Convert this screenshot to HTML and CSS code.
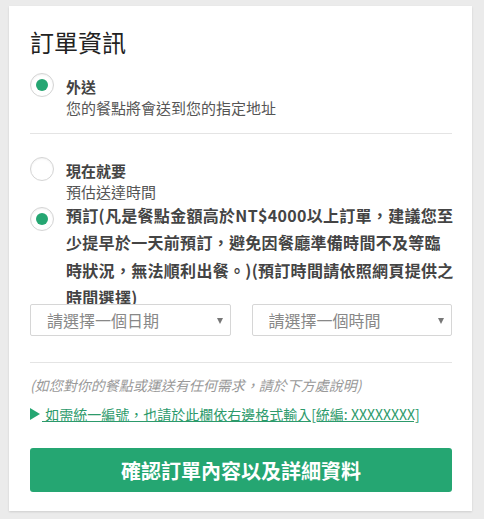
FILE: index.html
```html
<!DOCTYPE html>
<html lang="zh-Hant">
<head>
  <meta charset="UTF-8" />
  <meta name="viewport" content="width=device-width, initial-scale=1.0" />
  <title>訂單資訊</title>
  <link rel="stylesheet" href="styles.css">
</head>
<body>
  <div class="card">
    <h2 class="title">訂單資訊</h2>

    <label class="option option-first">
      <span class="radio checked"></span>
      <span class="option-text">
        <span class="option-name">外送</span>
        <span class="option-desc">您的餐點將會送到您的指定地址</span>
      </span>
    </label>

    <div class="divider"></div>

    <label class="option option-now">
      <span class="radio"></span>
      <span class="option-text">
        <span class="option-name">現在就要</span>
        <span class="option-desc">預估送達時間</span>
      </span>
    </label>

    <label class="option option-long">
      <span class="radio checked"></span>
      <span class="option-text long-text">預訂(凡是餐點金額高於NT$4000以上訂單，建議您至<br>少提早於一天前預訂，避免因餐廳準備時間不及等臨<br>時狀況，無法順利出餐。)(預訂時間請依照網頁提供之<br>時間選擇)</span>
    </label>

    <div class="selects">
      <div class="select-wrap">
        <select class="select">
          <option>請選擇一個日期</option>
        </select>
      </div>
      <div class="select-wrap">
        <select class="select">
          <option>請選擇一個時間</option>
        </select>
      </div>
    </div>

    <div class="divider divider-low"></div>

    <p class="note">(如您對你的餐點或運送有任何需求，請於下方處說明)</p>

    <a class="tax-link" href="#">
      <span class="triangle"></span>
      <span class="tax-text">&nbsp;如需統一編號，也請於此欄依右邊格式輸入[統編: XXXXXXXX]</span>
    </a>

    <button class="confirm">確認訂單內容以及詳細資料</button>
  </div>
</body>
</html>
```

FILE: styles.css
```css
body {
  margin: 0;
  padding: 6px 12px 9px 9px;
  background: #ebebeb;
  font-family: "Noto Sans CJK TC", sans-serif;
  color: #333;
}

.card {
  background: #fff;
  padding: 21px 20px 19px 21px;
  box-shadow: 0 1px 2px rgba(0, 0, 0, 0.12);
}

.title {
  margin: 0;
  font-size: 24px;
  line-height: 30px;
  font-weight: normal;
  color: #222;
}

.option {
  display: flex;
  align-items: flex-start;
  gap: 12px;
  cursor: pointer;
}

.option-first {
  margin-top: 19px;
}

.option-now {
  margin-top: 26px;
}

.radio {
  flex: none;
  width: 22px;
  height: 22px;
  margin-top: -3px;
  border: 1px solid #d4d4d4;
  border-radius: 50%;
  background: #fff;
  box-shadow: inset 0 1px 2px rgba(0, 0, 0, 0.06);
  display: flex;
  justify-content: center;
  align-items: center;
}

.radio.checked::after {
  content: "";
  width: 12px;
  height: 12px;
  border-radius: 50%;
  background: #25a672;
}

.option-text {
  display: flex;
  flex-direction: column;
  font-size: 15px;
  line-height: 21px;
}

.option-name {
  font-weight: bold;
  color: #444;
}

.option-desc {
  color: #555;
}

.option-long .radio {
  margin-top: 5px;
}

.long-text {
  display: block;
  font-size: 16px;
  line-height: 27.3px;
  font-weight: bold;
  color: #444;
  letter-spacing: 0.3px;
  white-space: nowrap;
}

.divider {
  height: 1px;
  background: #e4e4e4;
  margin-top: 15px;
}

.divider-low {
  margin-top: 26px;
}

.selects {
  display: grid;
  grid-template-columns: 1fr 1fr;
  gap: 21px;
  margin-top: -7px;
}

.select-wrap {
  position: relative;
}

.select-wrap::after {
  content: "";
  position: absolute;
  right: 8px;
  top: 14px;
  border-left: 3.5px solid transparent;
  border-right: 3.5px solid transparent;
  border-top: 6px solid #777;
  pointer-events: none;
}

.select {
  appearance: none;
  -webkit-appearance: none;
  width: 100%;
  height: 32px;
  padding: 0 20px 0 16px;
  border: 1px solid #d6d6d6;
  border-radius: 2px;
  background: #fff;
  font-family: "Noto Sans CJK TC", sans-serif;
  font-size: 16px;
  color: #888;
}

.note {
  margin: 12px 0 0;
  font-size: 14px;
  line-height: 20px;
  font-style: italic;
  color: #999;
}

.tax-link {
  display: flex;
  align-items: center;
  margin-top: 9px;
  color: #2c9a6b;
  text-decoration: none;
}

.triangle {
  width: 0;
  height: 0;
  border-top: 6px solid transparent;
  border-bottom: 6px solid transparent;
  border-left: 10px solid #25a672;
}

.tax-text {
  margin-left: 2px;
  font-size: 14px;
  line-height: 20px;
  text-decoration: underline;
}

.confirm {
  display: block;
  width: 100%;
  height: 44px;
  margin-top: 24px;
  border: 0;
  border-radius: 3px;
  background: #25a672;
  color: #fff;
  font-family: "Noto Sans CJK TC", sans-serif;
  font-size: 20px;
  font-weight: bold;
  cursor: pointer;
}
```
